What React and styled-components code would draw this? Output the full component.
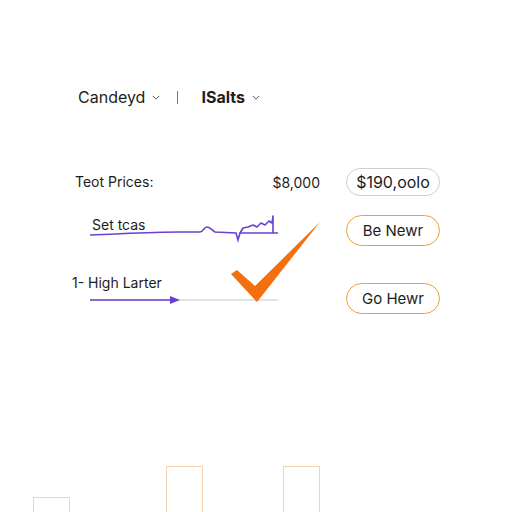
import styled, { createGlobalStyle } from "styled-components";

const GlobalStyle = createGlobalStyle`
  html, body {
    margin: 0;
    padding: 0;
    background: #ffffff;
    overflow: hidden;
  }
  body {
    font-family: "Inter", "Liberation Sans", sans-serif;
    color: #1c1c1c;
  }
`;

export default function App() {
  return (
    <>
      <GlobalStyle />
      <Page>
        <Header>
          <MenuItem>
            Candeyd <Chevron />
          </MenuItem>
          <Separator />
          <MenuItem $bold>
            ISalts <Chevron />
          </MenuItem>
        </Header>

        <Section>
          <Row $top={0}>
            <PriceCell>
              <Label>Teot Prices:</Label>
              <Value>$8,000</Value>
            </PriceCell>
            <Pill>$190,oolo</Pill>
          </Row>

          <Row $top={19}>
            <ChartCell>
              <Label $indent={20}>Set tcas</Label>
              <WaveChart />
            </ChartCell>
            <OutlineButton>Be Newr</OutlineButton>
          </Row>

          <Row $top={27}>
            <ChartCell>
              <Label>1- High Larter</Label>
              <ProgressLine />
            </ChartCell>
            <OutlineButton $offset={10}>Go Hewr</OutlineButton>
          </Row>

          <CheckMark />
        </Section>

        <Bars>
          <Bar $left={33} $height={15} />
          <Bar $left={96} $height={46} />
          <Bar $left={80} $height={46} />
        </Bars>
      </Page>
    </>
  );
}

function Chevron() {
  return (
    <ChevronSvg viewBox="0 0 10 6">
      <path d="M1 1 L5 5 L9 1" fill="none" stroke="#555" strokeWidth="1.2" />
    </ChevronSvg>
  );
}

function WaveChart() {
  return (
    <ChartSvg width="188" height="30" viewBox="0 0 188 30">
      <path
        d="M0 21 C30 20 60 18 90 18 L110 18 C113 18 114 13 117 13 C120 13 122 16 125 18 L146 19 L148 26 L150 19 L188 19"
        fill="none"
        stroke="#6b3fd4"
        strokeWidth="1.6"
      />
      <path
        d="M150 19 L153 14 L158 13 L163 11 L167 13 L171 9 L175 11 L179 7 L182 9 L183 2 L183 19"
        fill="none"
        stroke="#6b3fd4"
        strokeWidth="1.6"
        strokeLinejoin="round"
      />
    </ChartSvg>
  );
}

function ProgressLine() {
  return (
    <LineSvg width="188" height="12" viewBox="0 0 188 12">
      <line x1="0" y1="6" x2="188" y2="6" stroke="#c8c8c8" strokeWidth="1.2" />
      <line x1="0" y1="6" x2="82" y2="6" stroke="#6b3fd4" strokeWidth="1.6" />
      <path d="M80 2 L90 6 L80 10 Z" fill="#6b3fd4" />
    </LineSvg>
  );
}

function CheckMark() {
  return (
    <CheckSvg width="94" height="84" viewBox="0 0 94 84">
      <path
        d="M1 53 L7 49 L25 65 L90 1 L27 81 C19 72 9 62 1 53 Z"
        fill="#f56f0f"
      />
    </CheckSvg>
  );
}

const Page = styled.div`
  height: 100vh;
  display: flex;
  flex-direction: column;
`;

const Header = styled.div`
  display: flex;
  align-items: center;
  margin-top: 86px;
  padding-left: 78px;
  height: 22px;
`;

const MenuItem = styled.div`
  display: flex;
  align-items: center;
  gap: 7px;
  font-size: 16px;
  font-weight: ${(p) => (p.$bold ? 700 : 400)};
  color: #1e1e1e;
`;

const ChevronSvg = styled.svg`
  width: 8px;
  height: 5px;
`;

const Separator = styled.span`
  display: block;
  width: 1px;
  height: 13px;
  background: #777;
  margin: 0 23px 0 17px;
`;

const Section = styled.div`
  position: relative;
  margin-top: 60px;
  margin-left: 72px;
  display: flex;
  flex-direction: column;
`;

const Row = styled.div`
  display: grid;
  grid-template-columns: 248px 94px;
  column-gap: 26px;
  margin-top: ${(p) => p.$top}px;
`;

const PriceCell = styled.div`
  display: flex;
  align-items: center;
  justify-content: space-between;
  padding-left: 3px;
`;

const Label = styled.div`
  font-size: 14px;
  line-height: 16px;
  padding-left: ${(p) => p.$indent || 0}px;
  color: #1c1c1c;
  white-space: nowrap;
`;

const Value = styled.div`
  font-size: 14px;
  color: #1c1c1c;
`;

const Pill = styled.div`
  height: 28px;
  box-sizing: border-box;
  border: 1px solid #cfcfcf;
  border-radius: 14px;
  display: flex;
  align-items: center;
  justify-content: center;
  font-size: 16px;
  color: #1c1c1c;
`;

const ChartCell = styled.div`
  display: flex;
  flex-direction: column;
  padding-top: 2px;
`;

const ChartSvg = styled.svg`
  display: block;
  margin-top: -19px;
  margin-left: 18px;
`;

const LineSvg = styled.svg`
  display: block;
  margin-top: 3px;
  margin-left: 18px;
`;

const OutlineButton = styled.div`
  height: 31px;
  margin-top: ${(p) => p.$offset || 0}px;
  box-sizing: border-box;
  border: 1.5px solid #f0a12c;
  border-radius: 16px;
  display: flex;
  align-items: center;
  justify-content: center;
  font-size: 15px;
  color: #1c1c1c;
`;

const CheckSvg = styled.svg`
  position: absolute;
  left: 158px;
  top: 53px;
`;

const Bars = styled.div`
  margin-top: auto;
  display: flex;
  align-items: flex-end;
`;

const Bar = styled.div`
  width: 37px;
  height: ${(p) => p.$height}px;
  margin-left: ${(p) => p.$left}px;
  box-sizing: border-box;
  border: 1.5px solid #f4d3ae;
  border-bottom: none;
`;
